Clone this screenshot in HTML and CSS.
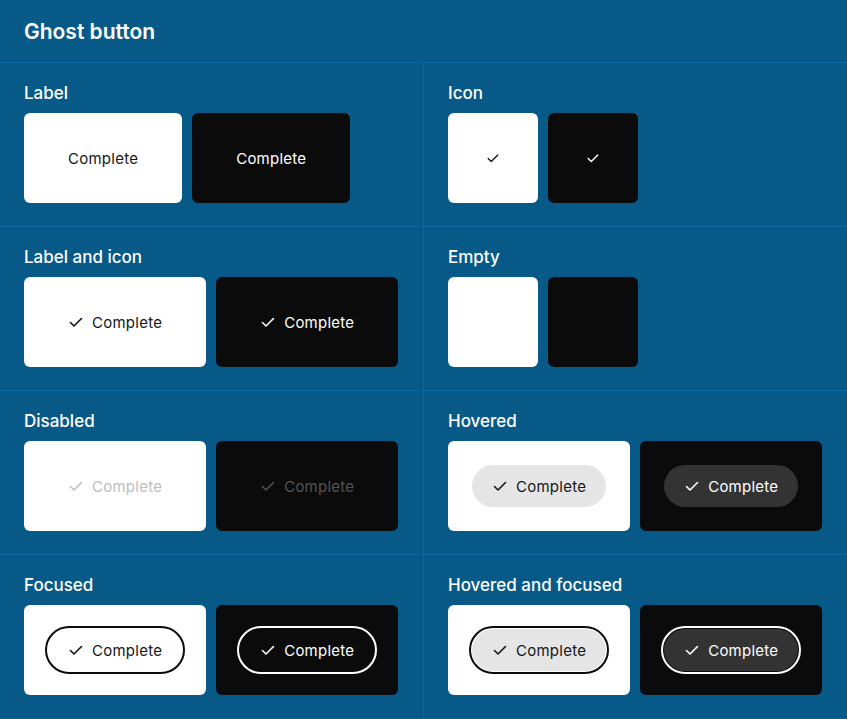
FILE: index.html
```html
<!DOCTYPE html>
<html>
<head>
<meta charset="utf-8">
<link rel="stylesheet" href="styles.css">
</head>
<body>
<div class="page">
  <header class="head"><h1>Ghost button</h1></header>
  <div class="grid">
    <section class="cell">
      <h2>Label</h2>
      <div class="cards">
        <div class="card light"><span class="btn">Complete</span></div>
        <div class="card dark"><span class="btn">Complete</span></div>
      </div>
    </section>
    <section class="cell">
      <h2>Icon</h2>
      <div class="cards">
        <div class="card light"><span class="btn icon-only"><svg class="chk sm" viewBox="0 0 16 16"><path d="M2.5 8.5l3.5 3.5 7.5-7.5"/></svg></span></div>
        <div class="card dark"><span class="btn icon-only"><svg class="chk sm" viewBox="0 0 16 16"><path d="M2.5 8.5l3.5 3.5 7.5-7.5"/></svg></span></div>
      </div>
    </section>
    <section class="cell">
      <h2>Label and icon</h2>
      <div class="cards">
        <div class="card light"><span class="btn"><svg class="chk" viewBox="0 0 16 16"><path d="M2.5 8.5l3.5 3.5 7.5-7.5"/></svg>Complete</span></div>
        <div class="card dark"><span class="btn"><svg class="chk" viewBox="0 0 16 16"><path d="M2.5 8.5l3.5 3.5 7.5-7.5"/></svg>Complete</span></div>
      </div>
    </section>
    <section class="cell">
      <h2>Empty</h2>
      <div class="cards">
        <div class="card light"><span class="btn icon-only"></span></div>
        <div class="card dark"><span class="btn icon-only"></span></div>
      </div>
    </section>
    <section class="cell">
      <h2>Disabled</h2>
      <div class="cards">
        <div class="card light"><span class="btn disabled"><svg class="chk" viewBox="0 0 16 16"><path d="M2.5 8.5l3.5 3.5 7.5-7.5"/></svg>Complete</span></div>
        <div class="card dark"><span class="btn disabled"><svg class="chk" viewBox="0 0 16 16"><path d="M2.5 8.5l3.5 3.5 7.5-7.5"/></svg>Complete</span></div>
      </div>
    </section>
    <section class="cell">
      <h2>Hovered</h2>
      <div class="cards">
        <div class="card light"><span class="btn hover"><svg class="chk" viewBox="0 0 16 16"><path d="M2.5 8.5l3.5 3.5 7.5-7.5"/></svg>Complete</span></div>
        <div class="card dark"><span class="btn hover"><svg class="chk" viewBox="0 0 16 16"><path d="M2.5 8.5l3.5 3.5 7.5-7.5"/></svg>Complete</span></div>
      </div>
    </section>
    <section class="cell">
      <h2>Focused</h2>
      <div class="cards">
        <div class="card light"><span class="btn focus"><svg class="chk" viewBox="0 0 16 16"><path d="M2.5 8.5l3.5 3.5 7.5-7.5"/></svg>Complete</span></div>
        <div class="card dark"><span class="btn focus"><svg class="chk" viewBox="0 0 16 16"><path d="M2.5 8.5l3.5 3.5 7.5-7.5"/></svg>Complete</span></div>
      </div>
    </section>
    <section class="cell">
      <h2>Hovered and focused</h2>
      <div class="cards">
        <div class="card light"><span class="btn hover focus"><svg class="chk" viewBox="0 0 16 16"><path d="M2.5 8.5l3.5 3.5 7.5-7.5"/></svg>Complete</span></div>
        <div class="card dark"><span class="btn hover focus"><svg class="chk" viewBox="0 0 16 16"><path d="M2.5 8.5l3.5 3.5 7.5-7.5"/></svg>Complete</span></div>
      </div>
    </section>
  </div>
</div>
</body>
</html>
```

FILE: styles.css
```css
* { box-sizing: border-box; }
html, body { margin: 0; padding: 0; }
body {
  background: #075987;
  font-family: Inter, "Open Sans", "Liberation Sans", sans-serif;
  color: #ffffff;
  width: 847px;
  height: 719px;
  overflow: hidden;
}
.head {
  height: 63px;
  border-bottom: 1px solid #0c66a0;
  padding: 0 24px;
  display: flex;
  align-items: center;
}
.head h1 {
  margin: 0;
  font-size: 21px;
  font-weight: 600;
  letter-spacing: 0;
}
.grid {
  display: grid;
  grid-template-columns: 424px 423px;
}
.cell {
  padding: 20px 24px 23px;
  border-bottom: 1px solid #0c66a0;
  display: flex;
  flex-direction: column;
  gap: 10px;
}
.cell:nth-child(odd) { border-right: 1px solid #0c66a0; }
.cell h2 {
  margin: 0;
  font-size: 17px;
  line-height: 20px;
  font-weight: 500;
  letter-spacing: 0;
}
.cards {
  display: flex;
  gap: 10px;
}
.card {
  padding: 24px;
  border-radius: 6px;
  display: flex;
  align-items: center;
  justify-content: center;
}
.card.light { background: #ffffff; color: #161616; }
.card.dark { background: #0b0b0b; color: #ffffff; }
.btn {
  height: 42px;
  padding: 0 20px;
  border-radius: 21px;
  display: flex;
  align-items: center;
  gap: 8px;
  font-size: 15px;
  font-weight: 400;
  letter-spacing: 0.25px;
  white-space: nowrap;
}
.btn.icon-only {
  width: 42px;
  padding: 0;
  justify-content: center;
}
.chk {
  width: 16px;
  height: 16px;
  fill: none;
  stroke: currentColor;
  stroke-width: 1.6;
  stroke-linecap: round;
  stroke-linejoin: round;
}
.chk.sm { width: 14px; height: 14px; }
.light .btn.disabled { color: #bdbdbd; }
.dark .btn.disabled { color: #535353; }
.light .btn.hover { background: #e5e5e5; }
.dark .btn.hover { background: #333333; }
.light .btn.focus { outline: 2px solid #0b0b0b; outline-offset: 1px; }
.dark .btn.focus { outline: 2px solid #ffffff; outline-offset: 1px; }
```
